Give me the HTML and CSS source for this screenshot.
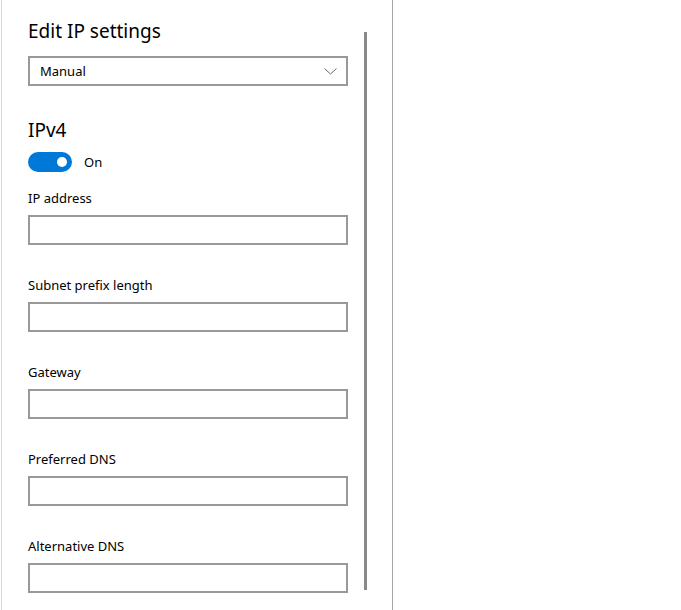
FILE: index.html
```html
<!DOCTYPE html>
<html>
<head>
<meta charset="utf-8">
<link rel="stylesheet" href="styles.css">
</head>
<body>
<div class="panel">
  <div class="scrollbar"></div>
  <div class="title">Edit IP settings</div>
  <div class="select">
    <span>Manual</span>
    <svg class="chev" width="13" height="7" viewBox="0 0 13 7"><path d="M0.5 0.5 L6.5 6 L12.5 0.5" fill="none" stroke="#666" stroke-width="1"/></svg>
  </div>
  <div class="section">IPv4</div>
  <div class="toggle-row">
    <div class="toggle"><div class="knob"></div></div>
    <span class="toggle-label">On</span>
  </div>
  <div class="fields">
    <div class="field"><div class="label">IP address</div><div class="input"></div></div>
    <div class="field"><div class="label">Subnet prefix length</div><div class="input"></div></div>
    <div class="field"><div class="label">Gateway</div><div class="input"></div></div>
    <div class="field"><div class="label">Preferred DNS</div><div class="input"></div></div>
    <div class="field"><div class="label">Alternative DNS</div><div class="input"></div></div>
  </div>
</div>
</body>
</html>
```
FILE: styles.css
```css
html, body {
  margin: 0;
  padding: 0;
  background: #fff;
}
body {
  font-family: "Noto Sans", "Open Sans", sans-serif;
  color: #000;
  height: 610px;
  overflow: hidden;
}
.panel {
  position: relative;
  box-sizing: border-box;
  width: 393px;
  height: 610px;
  border-right: 1px solid #a6a6a6;
  border-left: 1px solid #fff;
  box-shadow: inset 1px 0 0 #d6d6d6;
  padding-left: 27px;
  padding-top: 17px;
  display: flex;
  flex-direction: column;
}
.scrollbar {
  position: absolute;
  left: 363px;
  top: 32px;
  width: 3px;
  height: 558px;
  background: #8a8a8a;
}
.title, .section {
  font-size: 19px;
  line-height: 28px;
  height: 28px;
  white-space: nowrap;
}
.select {
  box-sizing: border-box;
  margin-top: 11px;
  width: 320px;
  height: 30px;
  border: 2px solid #999;
  display: flex;
  align-items: center;
  justify-content: space-between;
  padding: 0 9px 0 10px;
  font-size: 13px;
}
.chev { display: block; }
.section {
  margin-top: 30px;
}
.toggle-row {
  margin-top: 8px;
  height: 20px;
  display: flex;
  align-items: center;
  gap: 12px;
}
.toggle {
  width: 44px;
  height: 20px;
  border-radius: 10px;
  background: #0078d7;
  display: flex;
  align-items: center;
  justify-content: flex-end;
  padding-right: 5px;
  box-sizing: border-box;
}
.knob {
  width: 10px;
  height: 10px;
  border-radius: 50%;
  background: #fff;
}
.toggle-label {
  font-size: 13px;
}
.fields {
  margin-top: 17px;
  display: flex;
  flex-direction: column;
  gap: 31px;
}
.field {
  display: flex;
  flex-direction: column;
  gap: 8px;
}
.label {
  font-size: 13px;
  line-height: 18px;
  height: 18px;
  white-space: nowrap;
}
.input {
  box-sizing: border-box;
  width: 320px;
  height: 30px;
  border: 2px solid #999;
  background: #fff;
}
```
